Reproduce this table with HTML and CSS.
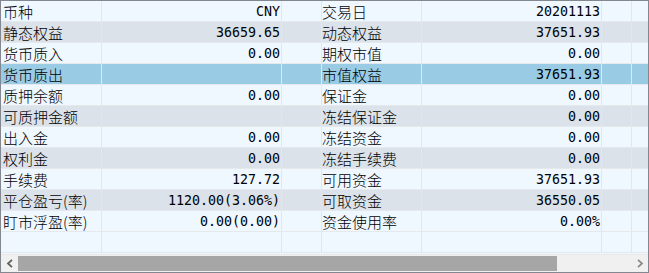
FILE: index.html
```html
<!DOCTYPE html>
<html lang="zh-CN">
<head>
<meta charset="utf-8">
<title>资金</title>
<link rel="stylesheet" href="styles.css">
</head>
<body>
<div class="panel">
  <div class="table">
    <div class="row even"><div class="c lab">币种</div><div class="c val">CNY</div><div class="c"></div><div class="c lab2">交易日</div><div class="c val">20201113</div><div class="c"></div><div class="c last"></div></div>
    <div class="row odd"><div class="c lab">静态权益</div><div class="c val">36659.65</div><div class="c"></div><div class="c lab2">动态权益</div><div class="c val">37651.93</div><div class="c"></div><div class="c last"></div></div>
    <div class="row even"><div class="c lab">货币质入</div><div class="c val">0.00</div><div class="c"></div><div class="c lab2">期权市值</div><div class="c val">0.00</div><div class="c"></div><div class="c last"></div></div>
    <div class="row sel"><div class="c lab">货币质出</div><div class="c val"></div><div class="c"></div><div class="c lab2">市值权益</div><div class="c val">37651.93</div><div class="c"></div><div class="c last"></div></div>
    <div class="row even"><div class="c lab">质押余额</div><div class="c val">0.00</div><div class="c"></div><div class="c lab2">保证金</div><div class="c val">0.00</div><div class="c"></div><div class="c last"></div></div>
    <div class="row odd"><div class="c lab">可质押金额</div><div class="c val"></div><div class="c"></div><div class="c lab2">冻结保证金</div><div class="c val">0.00</div><div class="c"></div><div class="c last"></div></div>
    <div class="row even"><div class="c lab">出入金</div><div class="c val">0.00</div><div class="c"></div><div class="c lab2">冻结资金</div><div class="c val">0.00</div><div class="c"></div><div class="c last"></div></div>
    <div class="row odd"><div class="c lab">权利金</div><div class="c val">0.00</div><div class="c"></div><div class="c lab2">冻结手续费</div><div class="c val">0.00</div><div class="c"></div><div class="c last"></div></div>
    <div class="row even"><div class="c lab">手续费</div><div class="c val">127.72</div><div class="c"></div><div class="c lab2">可用资金</div><div class="c val">37651.93</div><div class="c"></div><div class="c last"></div></div>
    <div class="row odd"><div class="c lab">平仓盈亏(率)</div><div class="c val">1120.00(3.06%)</div><div class="c"></div><div class="c lab2">可取资金</div><div class="c val">36550.05</div><div class="c"></div><div class="c last"></div></div>
    <div class="row even"><div class="c lab">盯市浮盈(率)</div><div class="c val">0.00(0.00)</div><div class="c"></div><div class="c lab2">资金使用率</div><div class="c val">0.00%</div><div class="c"></div><div class="c last"></div></div>
    <div class="row even"><div class="c lab"></div><div class="c val"></div><div class="c"></div><div class="c lab2"></div><div class="c val"></div><div class="c"></div><div class="c last"></div></div>
  </div>
  <div class="hscroll">
    <div class="btn left"><svg width="8" height="9" viewBox="0 0 8 9"><path d="M6 0.8 L2 4.5 L6 8.2" fill="none" stroke="#606060" stroke-width="1.8"/></svg></div>
    <div class="track"><div class="thumb"></div></div>
    <div class="btn right"><svg width="8" height="9" viewBox="0 0 8 9"><path d="M2 0.8 L6 4.5 L2 8.2" fill="none" stroke="#8a8a8a" stroke-width="1.8"/></svg></div>
  </div>
</div>
</body>
</html>
```
FILE: styles.css
```css
html, body {
  margin: 0;
  padding: 0;
  background: #ffffff;
}
.panel {
  width: 647px;
  height: 271px;
  border: 1px solid #828790;
  display: flex;
  flex-direction: column;
  overflow: hidden;
  background: #eff7ff;
}
.table {
  flex: 1;
  overflow: hidden;
}
.row {
  display: grid;
  grid-template-columns: 101px 180px 40px 100px 180px 30px 16px;
  height: 20px;
  border-bottom: 1px solid #e6e9ec;
}
.row.even { background: #eff7ff; }
.row.odd { background: #dce2e9; }
.row.sel { background: #9acbe5; }
.c {
  border-right: 1px solid #e4e6e8;
  display: flex;
  align-items: center;
  overflow: hidden;
  white-space: nowrap;
  color: #000;
}
.c.last { border-right: none; }
.lab, .lab2 {
  font-family: "Noto Sans CJK SC", "Noto Sans", sans-serif;
  font-size: 15px;
  font-weight: 300;
}
.lab { padding-left: 2px; }
.lab2 { padding-left: 0; }
.val {
  font-family: "DejaVu Sans Mono", "Liberation Mono", monospace;
  font-size: 13.3px;
  justify-content: flex-end;
  padding-right: 1px;
}
.hscroll {
  height: 17px;
  display: flex;
  background: #f0f0f0;
  border-top: 1px solid #e8e8e8;
}
.btn {
  width: 17px;
  display: flex;
  align-items: center;
  justify-content: center;
}
.track {
  flex: 1;
  display: flex;
  align-items: stretch;
}
.thumb {
  width: 539px;
  margin: 1px 0;
  background: #a6a6a6;
}
```
